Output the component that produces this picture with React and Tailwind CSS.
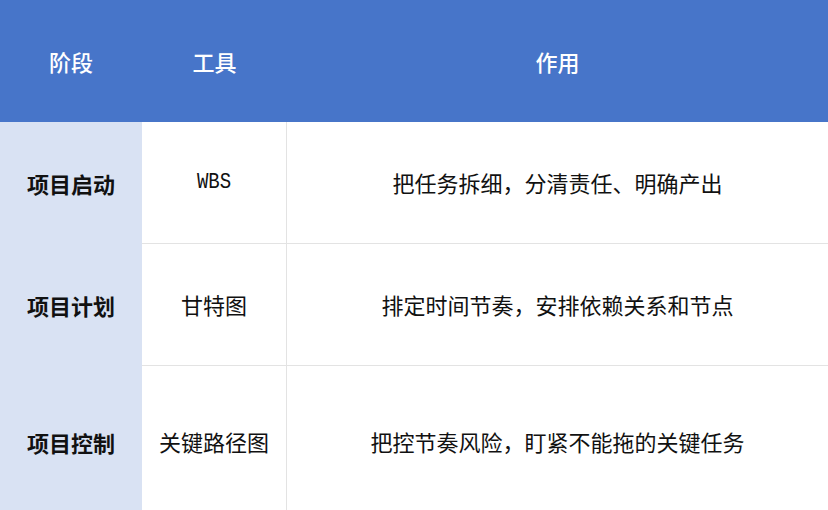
const rows = [
  { stage: "项目启动", tool: "WBS", use: "把任务拆细，分清责任、明确产出", h: "h-[122px]" },
  { stage: "项目计划", tool: "甘特图", use: "排定时间节奏，安排依赖关系和节点", h: "h-[122px]" },
  { stage: "项目控制", tool: "关键路径图", use: "把控节奏风险，盯紧不能拖的关键任务", h: "h-[152px]" },
]

const cjk = { fontFamily: '"Noto Sans CJK SC", sans-serif' }

const App = () => {
  return (
    <div className="w-[828px] h-[510px] overflow-hidden bg-white text-[22px] text-[#111]" style={cjk}>
      {/* header */}
      <div className="grid grid-cols-[142px_145px_1fr] h-[122px] bg-[#4775c9] text-white font-medium">
        <div className="flex items-center justify-center">阶段</div>
        <div className="flex items-center justify-center">工具</div>
        <div className="flex items-center justify-center">作用</div>
      </div>

      {rows.map((r) => (
        <div key={r.stage} className={`grid grid-cols-[142px_145px_1fr] ${r.h}`}>
          <div className="flex items-center justify-center bg-[#d9e2f3] font-bold">{r.stage}</div>
          <div className="flex items-center justify-center border-r border-b border-[#e3e3e3]">
            {r.tool === "WBS" ? (
              <span className="text-[19px] inline-block scale-y-[1.2]" style={{ fontFamily: '"Liberation Mono", monospace' }}>WBS</span>
            ) : (
              r.tool
            )}
          </div>
          <div className="flex items-center justify-center border-b border-[#e3e3e3]">{r.use}</div>
        </div>
      ))}
    </div>
  )
}

export default App
